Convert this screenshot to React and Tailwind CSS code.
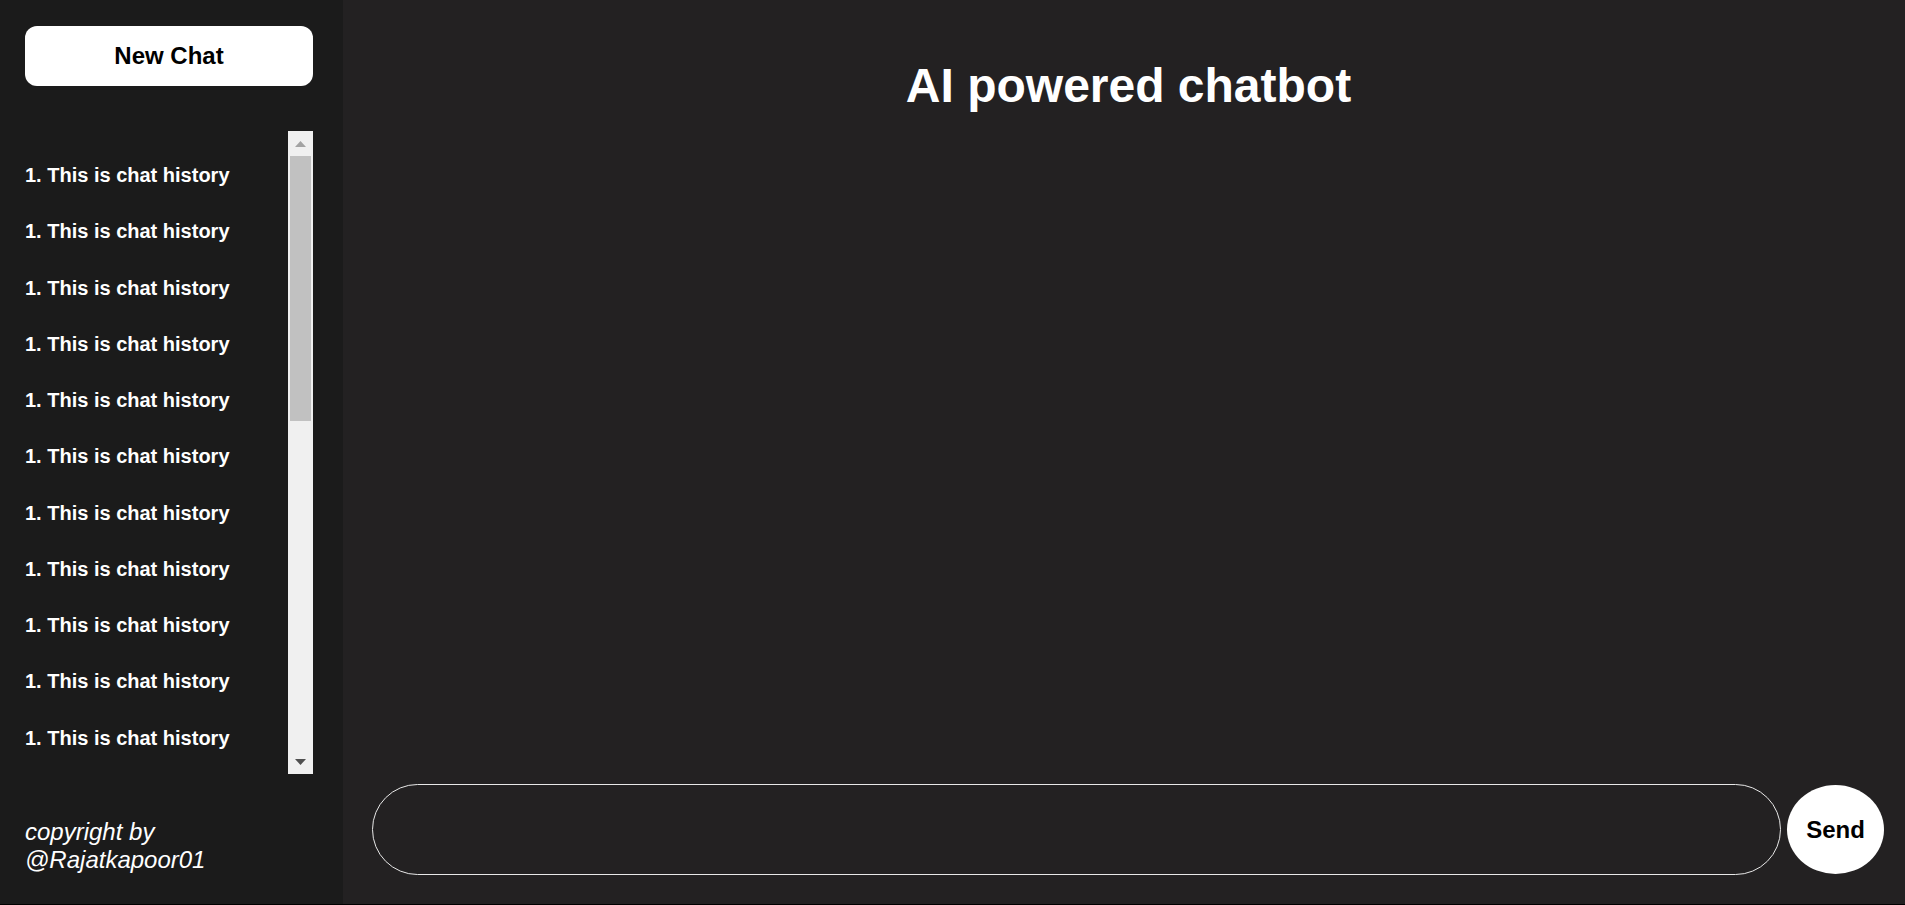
import React from 'react'

const history = Array.from({ length: 11 }, () => '1. This is chat history')

function Arrow({ up, color }) {
  return (
    <svg width="11" height="6" viewBox="0 0 11 6" className={up ? '' : 'rotate-180'}>
      <polygon points="0,6 5.5,0 11,6" fill={color} />
    </svg>
  )
}

export default function App() {
  return (
    <div className="min-h-screen bg-black font-['Liberation_Sans',Arial,sans-serif] text-white">
      <div className="flex h-[904px] bg-[#232122]">
        {/* Sidebar */}
        <aside className="w-[343px] shrink-0 bg-[#1b1b1b] flex flex-col pl-[25px] pr-[30px] pt-[26px]">
          <button className="h-[60px] w-full bg-white rounded-[12px] text-black text-[24px] font-bold">
            New Chat
          </button>

          <div className="mt-[45px] h-[643px] flex">
            <div className="flex-1 overflow-hidden pt-[33px]">
              {history.map((item, i) => (
                <div key={i} className="text-[20px] font-bold leading-[23px] mb-[33.25px] whitespace-nowrap">
                  {item}
                </div>
              ))}
            </div>
            {/* scrollbar */}
            <div className="w-[25px] bg-[#f0f0f0] flex flex-col">
              <div className="h-[25px] flex items-center justify-center">
                <Arrow up color="#a3a3a3" />
              </div>
              <div className="h-[265px] mx-[2px] bg-[#c1c1c1]" />
              <div className="flex-1" />
              <div className="h-[25px] flex items-center justify-center">
                <Arrow color="#505050" />
              </div>
            </div>
          </div>

          <p className="mt-[44px] text-[24px] italic leading-[27.6px]">
            copyright by
            <br />
            @Rajatkapoor01
          </p>
        </aside>

        {/* Main */}
        <main className="flex-1 flex flex-col">
          <h1 className="mt-[58px] pl-[9px] text-center text-[48px] font-bold leading-[55px]">
            AI powered chatbot
          </h1>
          <div className="flex-1" />
          <div className="flex items-center gap-[6px] pl-[29px] pr-[21px] pb-[29px]">
            <input
              type="text"
              className="flex-1 h-[91px] rounded-full border border-[#e8e8e8] bg-transparent outline-none px-8 text-[20px] text-white"
            />
            <button className="w-[97px] h-[89px] rounded-[50%] bg-white text-black text-[24px] font-bold">
              Send
            </button>
          </div>
        </main>
      </div>
    </div>
  )
}
